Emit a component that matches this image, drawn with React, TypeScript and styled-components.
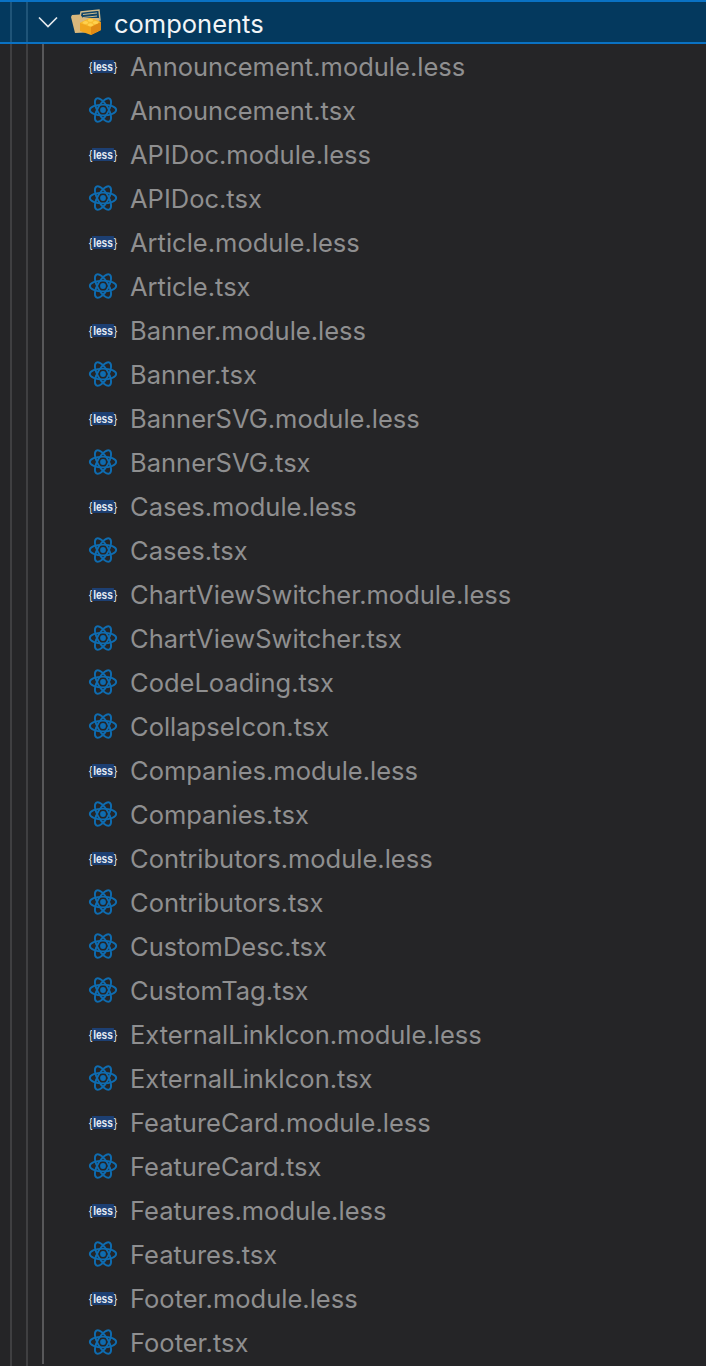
import React from "react";
import styled, { createGlobalStyle } from "styled-components";

const files = [
  "Announcement.module.less",
  "Announcement.tsx",
  "APIDoc.module.less",
  "APIDoc.tsx",
  "Article.module.less",
  "Article.tsx",
  "Banner.module.less",
  "Banner.tsx",
  "BannerSVG.module.less",
  "BannerSVG.tsx",
  "Cases.module.less",
  "Cases.tsx",
  "ChartViewSwitcher.module.less",
  "ChartViewSwitcher.tsx",
  "CodeLoading.tsx",
  "CollapseIcon.tsx",
  "Companies.module.less",
  "Companies.tsx",
  "Contributors.module.less",
  "Contributors.tsx",
  "CustomDesc.tsx",
  "CustomTag.tsx",
  "ExternalLinkIcon.module.less",
  "ExternalLinkIcon.tsx",
  "FeatureCard.module.less",
  "FeatureCard.tsx",
  "Features.module.less",
  "Features.tsx",
  "Footer.module.less",
  "Footer.tsx",
];

const ReactIcon = () => (
  <svg width="30" height="30" viewBox="0 0 30 30" fill="none" stroke="#0f6cb0" strokeWidth="1.9">
    <ellipse cx="15" cy="15" rx="13.2" ry="5.4" />
    <ellipse cx="15" cy="15" rx="13.2" ry="5.4" transform="rotate(60 15 15)" />
    <ellipse cx="15" cy="15" rx="13.2" ry="5.4" transform="rotate(120 15 15)" />
    <circle cx="15" cy="15" r="2.9" fill="#0f6cb0" stroke="none" />
  </svg>
);

const FolderIcon = () => (
  <svg width="32" height="28" viewBox="0 0 32 28">
    <path d="M9 9 L10 4 L28 2 L29 12 L9 12 Z" fill="#0f4468" stroke="#cdb98a" strokeWidth="1.4" />
    <path d="M12 6.5 L26 5 M12 9.5 L26 8" stroke="#cdb98a" strokeWidth="1" />
    <path d="M0 9 L1 7 L9 6.5 L12 10 L28 10 L27 24 L4 25 Z" fill="#d9b87c" />
    <path d="M9 15 L19 10 L30 14 L30 22 L20 27 L9 23 Z" fill="#f0a51e" />
    <path d="M9 15 L19 10 L30 14 L20 19 Z" fill="#f8bd30" />
    <path d="M20 19 L30 14 L30 22 L20 27 Z" fill="#e08a14" />
    <ellipse cx="14.5" cy="14.5" rx="2.6" ry="1.5" fill="#ffd24f" />
    <ellipse cx="19.5" cy="12.3" rx="2.6" ry="1.5" fill="#ffd24f" />
    <ellipse cx="19.5" cy="16.7" rx="2.6" ry="1.5" fill="#ffd24f" />
    <ellipse cx="24.5" cy="14.5" rx="2.6" ry="1.5" fill="#ffd24f" />
  </svg>
);

const Chevron = () => (
  <svg width="22" height="14" viewBox="0 0 22 14" fill="none" stroke="#e4e8ec" strokeWidth="1.7">
    <path d="M2 2.5 L11 11.5 L20 2.5" />
  </svg>
);

const LessIcon = () => (
  <LessBadge>
    <Brace>{"{"}</Brace>
    <LessWord>less</LessWord>
    <Brace>{"}"}</Brace>
  </LessBadge>
);

const FileRow = ({ name }: { name: string }) => (
  <Row>
    <IconSlot>{name.endsWith(".less") ? <LessIcon /> : <ReactIcon />}</IconSlot>
    <FileName>{name}</FileName>
  </Row>
);

export default function App() {
  return (
    <>
      <GlobalStyle />
      <Tree>
        <FolderRow>
          <Chevron />
          <FolderSlot>
            <FolderIcon />
          </FolderSlot>
          <FolderName>components</FolderName>
        </FolderRow>
        <FileList>
          {files.map((name) => (
            <FileRow key={name} name={name} />
          ))}
        </FileList>
      </Tree>
    </>
  );
}

const GlobalStyle = createGlobalStyle`
  html, body {
    margin: 0;
    padding: 0;
    background: #252527;
  }
`;

const Tree = styled.div`
  width: 706px;
  height: 1366px;
  overflow: hidden;
  font-family: Inter, "Liberation Sans", sans-serif;
  background-color: #252527;
  background-image: linear-gradient(#3f3f41, #3f3f41), linear-gradient(#3f3f41, #3f3f41);
  background-size: 2px 100%;
  background-position: 10px 0, 26px 0;
  background-repeat: no-repeat;
`;

const FolderRow = styled.div`
  height: 44px;
  box-sizing: border-box;
  display: flex;
  align-items: center;
  padding-left: 37px;
  border-top: 2px solid #0a72c4;
  border-bottom: 2px solid #0a72c4;
  background-color: #04395e;
  background-image: linear-gradient(#1f5478, #1f5478), linear-gradient(#1f5478, #1f5478);
  background-size: 2px 100%;
  background-position: 10px 0, 26px 0;
  background-repeat: no-repeat;
`;

const FolderSlot = styled.span`
  display: flex;
  margin-left: 12px;
`;

const FolderName = styled.span`
  margin-left: 11px;
  padding-top: 3px;
  color: #f2f5f7;
  font-size: 25.5px;
  line-height: 1;
`;

const FileList = styled.div`
  margin-left: 42px;
  border-left: 2px solid #58585a;
`;

const Row = styled.div`
  height: 44px;
  display: flex;
  align-items: center;
  padding-left: 43px;
`;

const IconSlot = styled.span`
  width: 32px;
  display: flex;
  justify-content: center;
  flex: none;
`;

const FileName = styled.span`
  margin-left: 11px;
  padding-top: 1px;
  color: #8f8f90;
  font-size: 25.5px;
  line-height: 1;
  white-space: nowrap;
`;

const LessBadge = styled.span`
  display: flex;
  align-items: center;
  transform: scaleX(0.78);
  font-family: "Liberation Sans", sans-serif;
  font-size: 13px;
  font-weight: 700;
  color: #e8edf5;
`;

const Brace = styled.span`
  font-size: 13px;
  font-weight: 400;
`;

const LessWord = styled.span`
  background: #1d3f72;
  padding: 0 1px;
  line-height: 13px;
`;
